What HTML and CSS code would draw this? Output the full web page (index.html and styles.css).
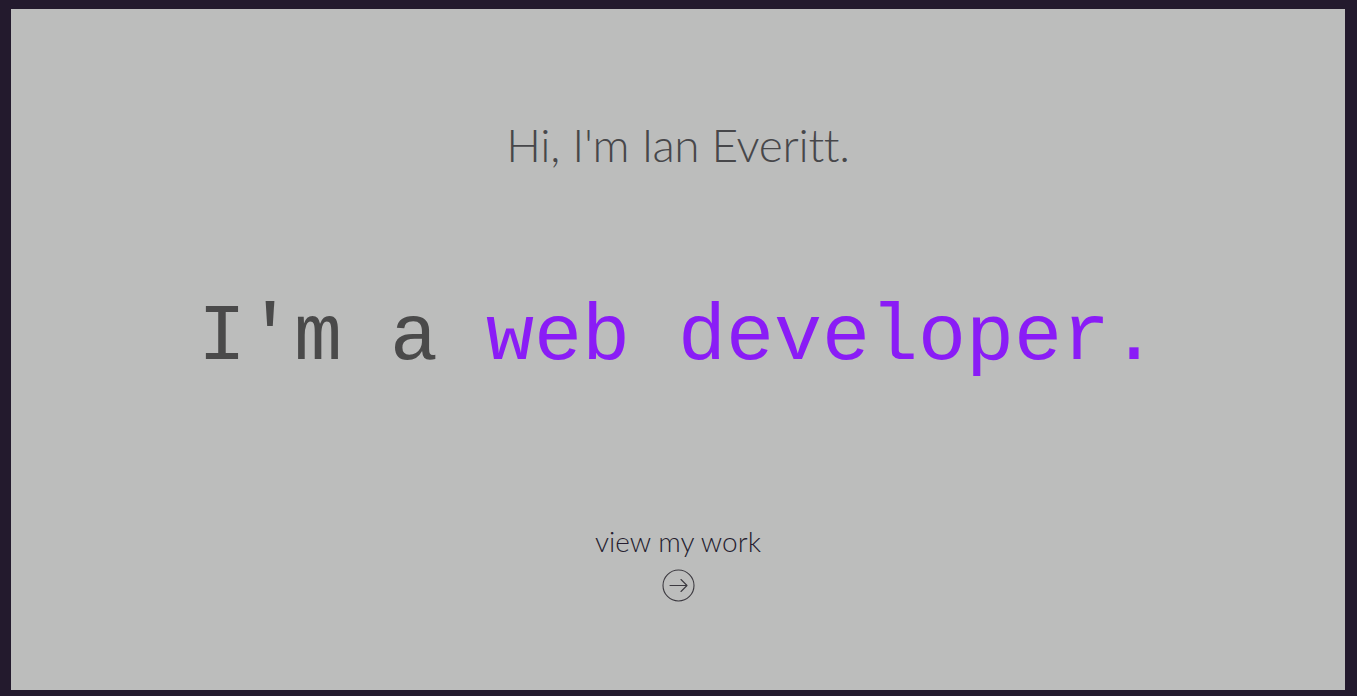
FILE: index.html
```html
<!DOCTYPE html>
<html lang="en">
<head>
<meta charset="utf-8">
<title>Ian Everitt</title>
<link rel="stylesheet" href="styles.css">
</head>
<body>
<main class="panel">
  <h1 class="greeting">Hi, I'm Ian Everitt.</h1>
  <p class="tagline">I'm a <span class="accent">web developer.</span></p>
  <a class="work-link" href="#work">
    <span class="work-text">view my work</span>
    <svg class="arrow" width="33" height="33" viewBox="0 0 33 33" aria-hidden="true">
      <circle cx="16.5" cy="16.5" r="15.5" fill="none" stroke="#3c3a40" stroke-width="1.1"/>
      <path d="M8 16.5 H25 M19 10.5 L25 16.5 L19 22.5" fill="none" stroke="#3c3a40" stroke-width="1.1" stroke-linecap="round" stroke-linejoin="round"/>
    </svg>
  </a>
</main>
</body>
</html>
```
FILE: styles.css
```css
html, body {
  margin: 0;
  height: 100%;
}
body {
  background: #231a2d;
  padding: 9px 12px 6px 11px;
  box-sizing: border-box;
}
.panel {
  background: #bcbdbc;
  height: 100%;
  display: flex;
  flex-direction: column;
  align-items: center;
  box-sizing: border-box;
  padding-top: 106px;
}
.greeting {
  margin: 0;
  font-family: "Lato", "Open Sans", sans-serif;
  font-weight: 300;
  font-size: 46px;
  line-height: 60px;
  color: #47474a;
  letter-spacing: -0.3px;
}
.tagline {
  margin: 118px 0 0;
  font-family: "Courier New", "Nimbus Mono PS", "FreeMono", "Liberation Mono", monospace;
  font-size: 80px;
  line-height: 90px;
  color: #4a4a4a;
}
.accent {
  color: #8a1cf6;
}
.work-link {
  margin-top: 141px;
  display: flex;
  flex-direction: column;
  align-items: center;
  gap: 11px;
  text-decoration: none;
}
.work-text {
  font-family: "Lato", "Open Sans", sans-serif;
  font-weight: 300;
  font-size: 28px;
  line-height: 34px;
  color: #261d30;
}
.arrow {
  display: block;
}
```
